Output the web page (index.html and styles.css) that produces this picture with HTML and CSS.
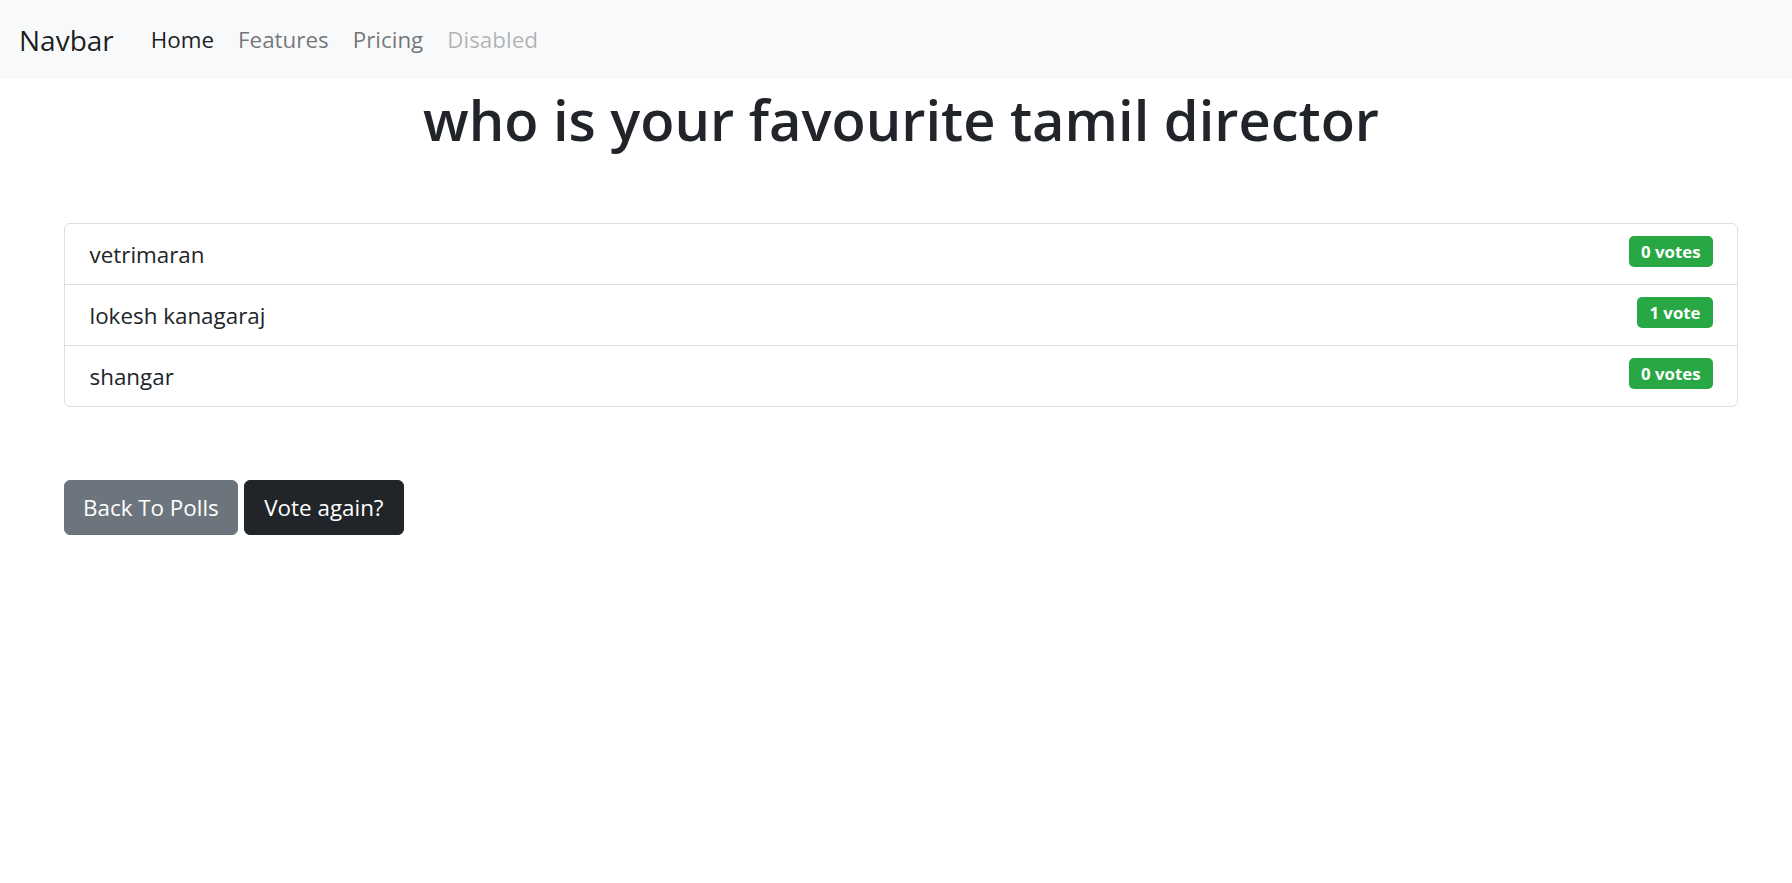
FILE: index.html
```html
<!DOCTYPE html>
<html lang="en">
<head>
<meta charset="utf-8">
<title>Poll results</title>
<link rel="stylesheet" href="styles.css">
</head>
<body>
<nav class="navbar">
  <a class="brand" href="#">Navbar</a>
  <ul class="nav">
    <li><a class="nav-link active" href="#">Home</a></li>
    <li><a class="nav-link" href="#">Features</a></li>
    <li><a class="nav-link" href="#">Pricing</a></li>
    <li><a class="nav-link disabled" href="#">Disabled</a></li>
  </ul>
</nav>
<main class="content">
  <h1 class="title">who is your favourite tamil director</h1>
  <ul class="list">
    <li class="item"><span class="name">vetrimaran</span><span class="badge">0 votes</span></li>
    <li class="item"><span class="name">lokesh kanagaraj</span><span class="badge">1 vote</span></li>
    <li class="item"><span class="name">shangar</span><span class="badge">0 votes</span></li>
  </ul>
  <div class="actions">
    <a class="btn btn-secondary" href="#">Back To Polls</a>
    <a class="btn btn-dark" href="#">Vote again?</a>
  </div>
</main>
</body>
</html>
```
FILE: styles.css
```css
* { box-sizing: border-box; }
html, body { margin: 0; padding: 0; }
body {
  font-family: "Open Sans", "Noto Sans", sans-serif;
  color: #212529;
  background: #fff;
}
a { text-decoration: none; }

.navbar {
  height: 79px;
  background: #f8f9fa;
  display: flex;
  align-items: center;
  padding: 0 0 0 19px;
}
.brand {
  font-size: 28px;
  line-height: 40px;
  color: rgba(0, 0, 0, 0.9);
  margin-right: 25px;
}
.nav {
  list-style: none;
  margin: 0;
  padding: 0;
  display: flex;
}
.nav-link {
  display: block;
  font-size: 22.4px;
  line-height: 34px;
  padding: 0 12px;
  color: rgba(0, 0, 0, 0.55);
}
.nav-link.active { color: rgba(0, 0, 0, 0.9); }
.nav-link.disabled { color: rgba(0, 0, 0, 0.3); }

.content {
  padding: 0 54px 0 64px;
}
.title {
  margin: 7px 0 0;
  font-size: 56px;
  line-height: 67px;
  font-weight: 600;
  text-align: center;
  color: #212529;
}
.list {
  list-style: none;
  margin: 70px 0 0;
  padding: 0;
  border: 1px solid #dfdfdf;
  border-radius: 6px;
}
.item {
  height: 60px;
  display: flex;
  justify-content: space-between;
  align-items: flex-start;
  padding: 12px 24px 0 24.5px;
}
.item + .item { border-top: 1px solid #dfdfdf; height: 61px; }
.name {
  font-size: 22.4px;
  line-height: 38px;
  margin-top: -12px;
  padding-top: 12px;
}
.badge {
  display: inline-block;
  height: 31px;
  line-height: 31px;
  padding: 0 12.5px;
  border-radius: 5px;
  background: #28a745;
  color: #fff;
  font-size: 16.8px;
  font-weight: 700;
}
.actions {
  margin-top: 73px;
  display: flex;
  gap: 6px;
}
.btn {
  display: inline-block;
  height: 55px;
  line-height: 53px;
  padding: 0 18px;
  border: 1px solid transparent;
  border-radius: 6px;
  font-size: 22.4px;
  color: #fff;
}
.btn-secondary { background: #6c757d; border-color: #6c757d; }
.btn-dark { background: #212529; border-color: #212529; padding: 0 19.5px; }
```
